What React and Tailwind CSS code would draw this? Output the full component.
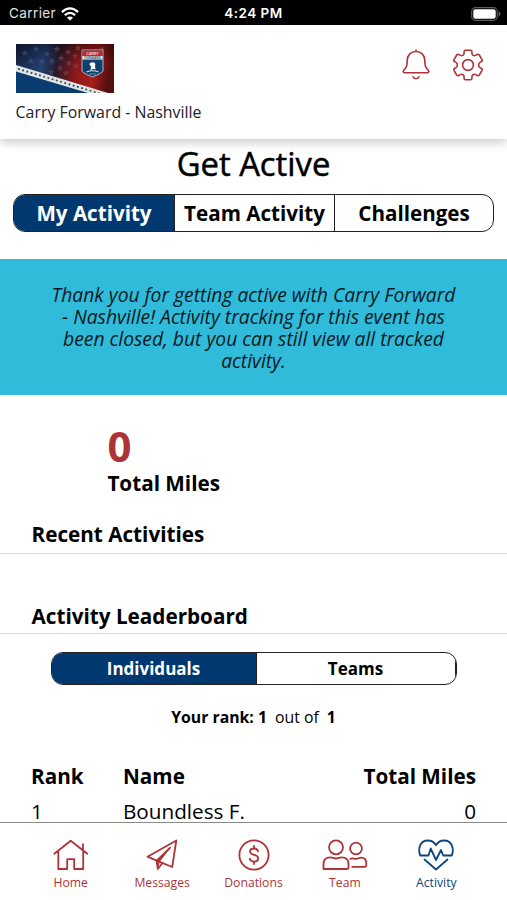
import clsx from 'clsx';

const star = 'M0 -3.4L1 -1.1L3.4 -1L1.5 0.5L2.1 2.9L0 1.5L-2.1 2.9L-1.5 0.5L-3.4 -1L-1 -1.1Z';

const starSpots = [
  [9, 9], [20, 5], [31, 10], [41, 5], [36, 17], [26, 17], [45, 14], [52, 8], [59, 12],
  [44, 24], [53, 19], [35, 28], [62, 4], [50, 29], [15, 17], [86, 5], [60, 22],
];

function EventBanner() {
  return (
    <svg width="98" height="49" viewBox="0 0 98 49">
      <defs>
        <linearGradient id="sky" x1="0" x2="1" y1="0" y2="0.1">
          <stop offset="0" stopColor="#17213f" />
          <stop offset="0.3" stopColor="#24406f" />
          <stop offset="0.46" stopColor="#2a1a2c" />
          <stop offset="0.66" stopColor="#8c1818" />
          <stop offset="0.84" stopColor="#a81d19" />
          <stop offset="1" stopColor="#54100f" />
        </linearGradient>
        <linearGradient id="shade" x1="0" x2="0" y1="0" y2="1">
          <stop offset="0" stopColor="#000" stopOpacity="0.4" />
          <stop offset="0.4" stopColor="#000" stopOpacity="0" />
        </linearGradient>
        <clipPath id="frame">
          <rect width="98" height="49" />
        </clipPath>
      </defs>
      <g clipPath="url(#frame)">
        <rect width="98" height="49" fill="url(#sky)" />
        <rect width="98" height="49" fill="url(#shade)" />
        {starSpots.map(([x, y]) => (
          <path
            key={`${x}-${y}`}
            d={star}
            transform={`translate(${x} ${y})`}
            fill={x < 38 ? '#3d5788' : '#7c4a4b'}
            opacity="0.6"
          />
        ))}
        <path d="M0 26L76 49H0Z" fill="#0b3c70" />
        <path d="M0 21L92 49H72L0 27.500Z" fill="#dfe4e6" />
        <path d="M2 24.800L88 50.800" stroke="#34404c" strokeWidth="1.700" strokeDasharray="1.800 2.600" />
        <path d="M66 6H87V27Q86.500 29 76.500 33Q66.500 29 66 27Z" fill="#11406f" stroke="#b9c3cf" strokeWidth="0.900" />
        <rect x="66.500" y="6.500" width="20" height="5.500" fill="#c5252b" />
        <rect x="66.500" y="12" width="20" height="3.500" fill="#eef1f4" />
        <text x="76.500" y="10.800" textAnchor="middle" fontSize="3.800" fontWeight="700" fill="#f3c9ca">CARRY</text>
        <text x="76.500" y="15" textAnchor="middle" fontSize="3.300" fontWeight="700" fill="#33507a">FORWARD</text>
        <path d="M73.200 20Q75 17.500 78 18.500Q80 19.500 79 22L79.500 25.500L77 24.800L74.500 26.500L75 22.500Z" fill="#fff" />
        <path d="M70.500 28Q76.500 25.500 82.500 28" stroke="#d7dfe8" strokeWidth="1.200" fill="none" />
        <path d="M73 30H80" stroke="#8fa6c0" strokeWidth="0.700" />
      </g>
    </svg>
  );
}

function WifiIcon() {
  return (
    <svg width="18" height="14" viewBox="0 0 18 14" fill="none" stroke="#fff" strokeWidth="2.300">
      <path d="M0.900 5.100Q9 -2.300 17.100 5.100" />
      <path d="M3.800 8.200Q9 3.600 14.200 8.200" />
      <path d="M9 13.700L6 10.600Q9 8.300 12 10.600Z" fill="#fff" stroke="none" />
    </svg>
  );
}

function BatteryIcon() {
  return (
    <svg width="30" height="14" viewBox="0 0 30 14">
      <rect x="0.700" y="0.700" width="25.600" height="12.600" rx="3.800" fill="none" stroke="#5c5c5c" strokeWidth="1.200" />
      <rect x="2.300" y="2.300" width="22.400" height="9.400" rx="2.200" fill="#fff" />
      <path d="M27.700 4.600Q29.500 5.500 29.500 7T27.700 9.400Z" fill="#6a6a6a" />
    </svg>
  );
}

function BellIcon() {
  return (
    <svg width="28" height="32" viewBox="0 0 28 32" fill="none" stroke="currentColor" strokeWidth="1.600" strokeLinecap="round" strokeLinejoin="round">
      <path d="M14 1V2.500M14 2.500C8.500 2.500 5.200 6.400 5.200 11.500C5.200 17 4.600 18.300 1.700 21.300C0.800 22.500 1.300 23.800 2.700 23.800H25.300C26.700 23.800 27.200 22.500 26.300 21.300C23.400 18.300 22.800 17 22.800 11.500C22.800 6.400 19.500 2.500 14 2.500Z" />
      <path d="M11 27.800C11.800 30.300 16.200 30.300 17 27.800" />
    </svg>
  );
}

function GearIcon() {
  return (
    <svg width="32" height="32" viewBox="-16 -16 32 32" fill="none" stroke="currentColor" strokeWidth="1.600" strokeLinejoin="round">
      <path d="M-2.600 -14.800H2.600Q3.900 -14.800 3.900 -13.500V-12Q3.900 -10.400 5 -9.800Q6.300 -8.900 7.600 -9.600L9.300 -10.500Q10.500 -11.100 11.300 -10L14 -5.400Q14.700 -4.200 13.500 -3.500L12 -2.600Q10.700 -1.800 10.700 -0.500V0.500Q10.700 1.800 12 2.600L13.500 3.500Q14.700 4.200 14 5.400L11.300 10Q10.500 11.100 9.300 10.500L7.600 9.600Q6.300 8.900 5 9.800Q3.900 10.400 3.900 12V13.500Q3.900 14.800 2.600 14.800H-2.600Q-3.900 14.800 -3.900 13.500V12Q-3.900 10.400 -5 9.800Q-6.300 8.900 -7.600 9.600L-9.300 10.500Q-10.500 11.100 -11.300 10L-14 5.400Q-14.700 4.200 -13.500 3.500L-12 2.600Q-10.700 1.800 -10.700 0.500V-0.500Q-10.700 -1.800 -12 -2.600L-13.500 -3.500Q-14.700 -4.200 -14 -5.400L-11.300 -10Q-10.500 -11.100 -9.300 -10.500L-7.600 -9.600Q-6.300 -8.900 -5 -9.800Q-3.900 -10.400 -3.900 -12V-13.500Q-3.900 -14.800 -2.600 -14.800Z" />
      <circle r="5.400" />
    </svg>
  );
}

const navIcon = {
  height: 32,
  fill: 'none',
  stroke: 'currentColor',
  strokeWidth: 1.8,
  strokeLinecap: 'round',
  strokeLinejoin: 'round',
};

function HomeIcon() {
  return (
    <svg {...navIcon} width="36" viewBox="0 0 36 32">
      <path d="M1.300 14.800L17.700 1.700L34.300 14.800M5.300 12V30H14.200V20.200H21.200V30H30.200V12M30 5.200V11" />
    </svg>
  );
}

function MessagesIcon() {
  return (
    <svg {...navIcon} width="32" viewBox="0 0 32 32">
      <path d="M30.300 1.500L1.500 17.700L10.700 21.700L26.200 28L30.300 1.500Z" />
      <path d="M24 8.800L10.700 21.700L11.800 30L16.300 24.300" />
      <path d="M24 8.800L10.700 21.700L11.800 28L13.300 22.800Z" fill="currentColor" strokeWidth="1" />
    </svg>
  );
}

function DonationsIcon() {
  return (
    <svg {...navIcon} width="32" viewBox="0 0 32 32">
      <circle cx="16" cy="16" r="14.600" />
      <path d="M20 12.300C19.600 10.300 18 9.500 16 9.500C13.700 9.500 12 10.700 12 12.500C12 17 20.200 14.800 20.200 19.300C20.200 21.300 18.500 22.600 16 22.600C13.800 22.600 12.200 21.600 11.800 19.600M16 7V9.500M16 22.600V25" />
    </svg>
  );
}

function TeamIcon() {
  return (
    <svg {...navIcon} width="46" viewBox="0 0 46 32">
      <circle cx="14" cy="8.300" r="7" />
      <path d="M1.500 30V25C1.500 20.500 4.200 18.300 8.300 18.300C10.800 18.300 12 19.500 14 19.500C16 19.500 17.200 18.300 19.700 18.300C23.800 18.300 26.500 20.500 26.500 25V28.500Q26.500 30 25 30Z" />
      <circle cx="34" cy="9.500" r="5.900" />
      <path d="M28.300 20C29.500 18.700 31.800 19.800 34.200 19.800C36 19.800 37 18.700 39 18.700C42.500 18.700 44.300 20.800 44.300 24V26.300Q44.300 27.800 42.800 27.800H30.200" />
    </svg>
  );
}

function ActivityIcon() {
  return (
    <svg {...navIcon} width="36" viewBox="0 0 36 32">
      <path d="M2.200 16.500C-0.800 8.500 3.200 1.500 9.500 1.500C13.500 1.500 16.400 3.200 18 6.200C19.600 3.200 22.500 1.500 26.500 1.500C32.800 1.500 36.800 8.500 33.800 16.500H25.200L23 11L18 21L12.700 9.500L10.500 16.500H2.200" />
      <path d="M6.500 20.500L18 30.500L29.500 20.500" />
    </svg>
  );
}

const navItems = [
  { label: 'Home', Icon: HomeIcon },
  { label: 'Messages', Icon: MessagesIcon },
  { label: 'Donations', Icon: DonationsIcon },
  { label: 'Team', Icon: TeamIcon },
  { label: 'Activity', Icon: ActivityIcon, active: true },
];

const leaders = [{ rank: 1, name: 'Boundless F.', miles: 0 }];

export default function App() {
  return (
    <div className="flex h-[900px] w-[507px] flex-col overflow-hidden bg-white font-['Open_Sans',sans-serif] text-black">
      <div className="grid h-[25px] shrink-0 grid-cols-3 items-center bg-black pt-[2px] font-['Inter',sans-serif] text-[13.5px] text-white">
        <div className="flex items-center gap-[5px] pl-[9px] tracking-[0.4px] text-[#e2e2e2]">
          Carrier
          <WifiIcon />
        </div>
        <div className="text-center font-semibold tracking-[0.5px]">4:24 PM</div>
        <div className="flex justify-end pr-[6px]">
          <BatteryIcon />
        </div>
      </div>

      <header className="relative flex h-[114px] shrink-0 justify-between bg-white pl-[15.6px] pr-[23px] shadow-[0_3px_10px_rgba(0,0,0,0.22)]">
        <div className="pt-[19px]">
          <EventBanner />
          <p className="mt-[8px] text-[15.9px] leading-[22px] text-[#222]">Carry Forward - Nashville</p>
        </div>
        <div className="flex gap-[22px] pt-6 text-[#ae3337]">
          <BellIcon />
          <GearIcon />
        </div>
      </header>

      <main className="flex-1">
        <h1 className="pt-[5px] text-center text-[32.8px] font-medium leading-[40px] [-webkit-text-stroke:0.5px_black]">
          Get Active
        </h1>

        <div className="mx-auto mt-[10px] flex h-[38px] w-[481px] overflow-hidden rounded-[12px] border border-[#222] text-[20.6px] font-bold">
          <button className="w-[161px] border-r border-[#222] bg-[#00386f] text-white">My Activity</button>
          <button className="w-[160px] whitespace-nowrap border-r border-[#222]">Team Activity</button>
          <button className="flex-1">Challenges</button>
        </div>

        <div className="mt-[27px] h-[136px] bg-[#2fbbd9] px-[50px] pt-[25px] text-center text-[19.3px] italic leading-[22px] text-[#0b1a1e]">
          Thank you for getting active with Carry Forward - Nashville! Activity tracking for this event has been
          closed, but you can still view all tracked activity.
        </div>

        <div className="pl-[107.4px] pt-[26px]">
          <div className="text-[42px] font-bold leading-[50px] text-[#ae3337]">0</div>
          <div className="text-[20.7px] font-bold leading-[24px]">Total Miles</div>
        </div>

        <h2 className="mt-[25px] h-[34px] border-b border-[#d6d6d6] pl-[31.5px] text-[20.7px] font-bold leading-[28px]">
          Recent Activities
        </h2>
        <h2 className="mt-[48px] h-[32px] border-b border-[#d6d6d6] pl-[31.5px] text-[20.7px] font-bold leading-[28px]">
          Activity Leaderboard
        </h2>

        <div className="mx-auto mt-[18px] flex h-[33px] w-[406px] overflow-hidden rounded-[12px] border border-[#222] text-[17px] font-bold">
          <button className="w-[205px] border-r border-[#222] bg-[#00386f] text-white">Individuals</button>
          <button className="flex-1 border-r border-[#222]">Teams</button>
        </div>

        <p className="mt-[22px] flex justify-center gap-2 text-[15.8px] leading-[20px]">
          <b>Your rank: 1</b>
          <span>out of</span>
          <b>1</b>
        </p>

        <div className="mt-[35px] grid grid-cols-[92px_1fr_auto] px-[31px] text-[20.7px] leading-[28px]">
          <b>Rank</b>
          <b>Name</b>
          <b>Total Miles</b>
        </div>
        {leaders.map((row) => (
          <div key={row.name} className="mt-[11px] grid grid-cols-[92px_1fr_auto] px-[31px] text-[20.7px] leading-[20px]">
            <span>{row.rank}</span>
            <span>{row.name}</span>
            <span>{row.miles}</span>
          </div>
        ))}
      </main>

      <nav className="flex h-[78px] shrink-0 border-t border-[#8a8a8a] bg-white px-[25px] pt-4">
        {navItems.map(({ label, Icon, active }) => (
          <a
            key={label}
            className={clsx(
              'flex flex-1 flex-col items-center gap-[3px] text-[12.2px] leading-[17px]',
              active ? 'text-[#0b4680]' : 'text-[#ae3337]'
            )}
          >
            <Icon />
            {label}
          </a>
        ))}
      </nav>
    </div>
  );
}
